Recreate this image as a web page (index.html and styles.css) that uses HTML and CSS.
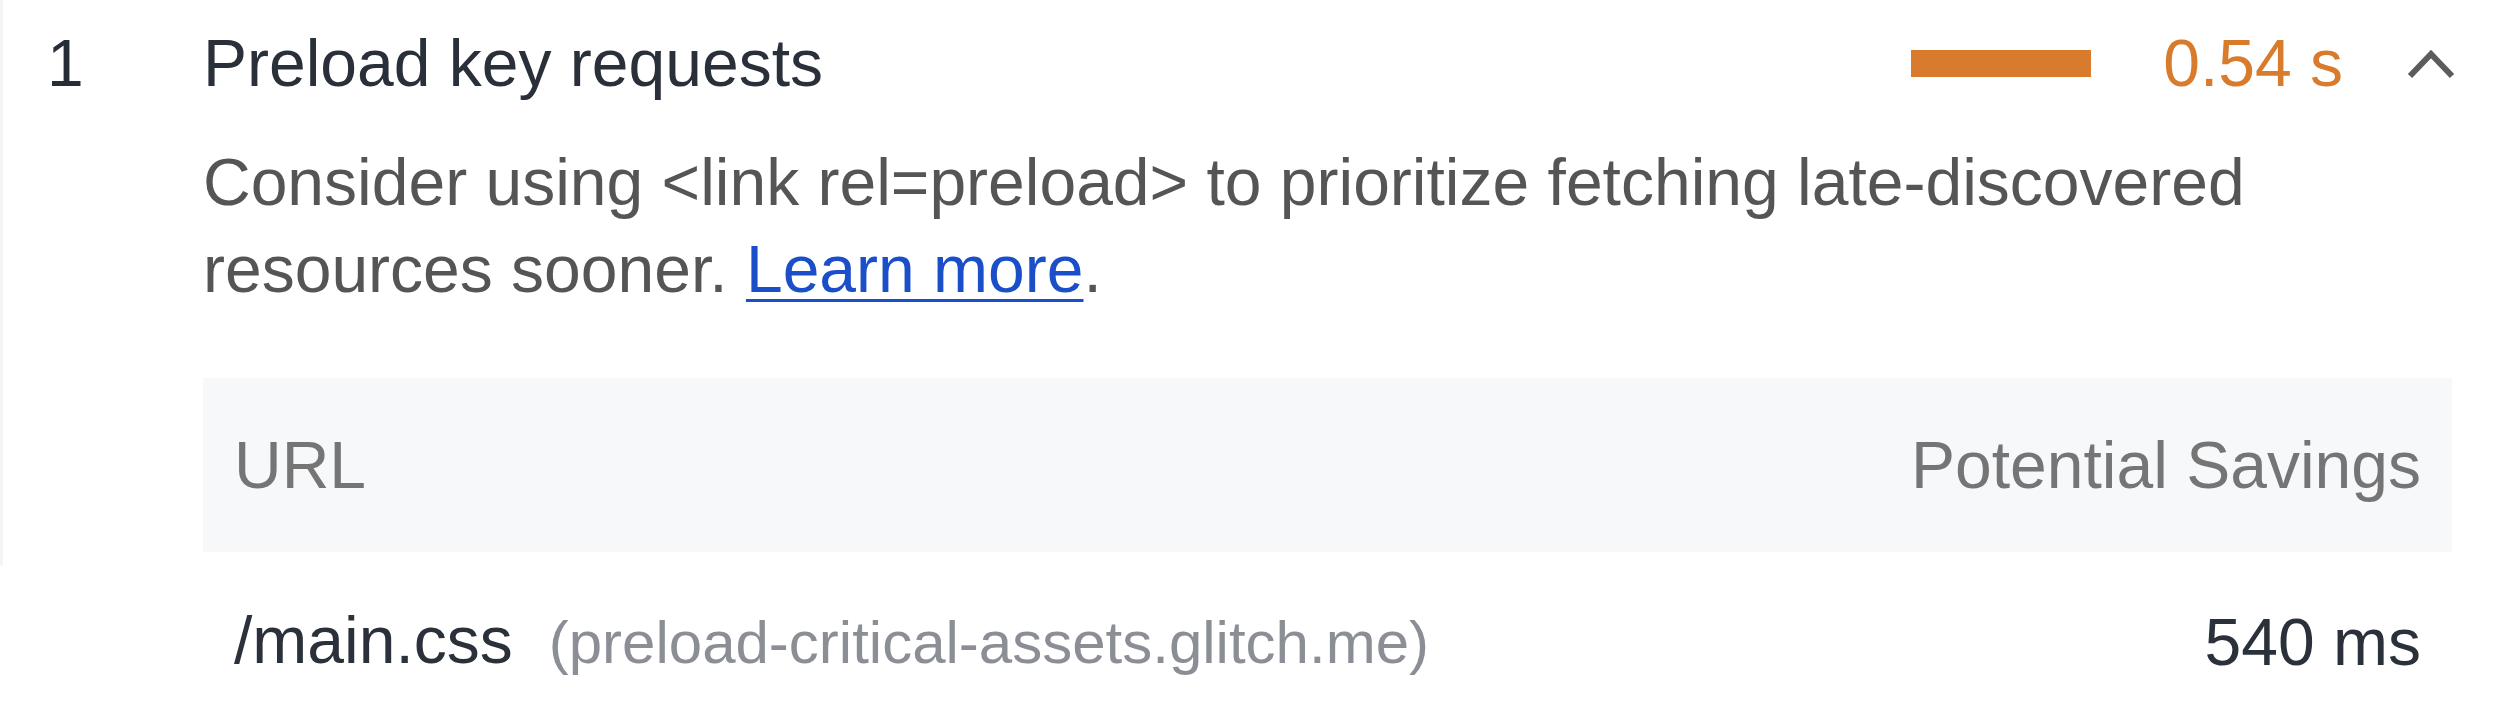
FILE: index.html
```html
<!DOCTYPE html>
<html lang="en">
<head>
<meta charset="utf-8">
<title>Preload key requests</title>
<link rel="stylesheet" href="styles.css">
</head>
<body>
<div class="page">
  <div class="edge"></div>
  <div class="audit">
    <div class="audit-header">
      <span class="audit-index">1</span>
      <span class="audit-title">Preload key requests</span>
      <span class="audit-bar"></span>
      <span class="audit-value">0.54 s</span>
      <svg class="chevron" width="48" height="30" viewBox="0 0 48 30" aria-hidden="true">
        <polyline points="3,27 24,5 45,27" fill="none" stroke="#5c5c5c" stroke-width="6"/>
      </svg>
    </div>
    <div class="audit-body">
      <p class="audit-desc">Consider using &lt;link rel=preload&gt; to prioritize fetching late-discovered resources sooner. <a class="link" href="#">Learn more</a>.</p>
      <table class="details">
        <thead>
          <tr><th class="col-url">URL</th><th class="col-num">Potential Savings</th></tr>
        </thead>
        <tbody>
          <tr>
            <td class="col-url"><span class="url-path">/main.css</span><span class="url-host">(preload-critical-assets.glitch.me)</span></td>
            <td class="col-num">540 ms</td>
          </tr>
        </tbody>
      </table>
    </div>
  </div>
</div>
</body>
</html>
```

FILE: styles.css
```css
html, body {
  margin: 0;
  padding: 0;
  background: #ffffff;
}

body {
  font-family: "Liberation Sans", Arial, Helvetica, sans-serif;
  font-size: 66px;
  color: #2a3039;
}

.page {
  display: flex;
  align-items: flex-start;
  width: 2500px;
  height: 721px;
  overflow: hidden;
}

.edge {
  flex: 0 0 3px;
  height: 566px;
  background: #f4f4f4;
  border-bottom-right-radius: 10px;
}

.audit {
  flex: 1;
  padding: 20px 45px 0 44px;
  min-width: 0;
}

.audit-header {
  display: flex;
  align-items: center;
  height: 87px;
  line-height: 87px;
}

.audit-index {
  flex: 0 0 156px;
  color: #262d36;
}

.audit-title {
  flex: 1;
  color: #2a3039;
}

.audit-bar {
  width: 180px;
  height: 27px;
  background: #d87b2c;
  margin-right: 72px;
}

.audit-value {
  color: #d87b2c;
  margin-right: 64px;
}

.chevron {
  display: block;
  flex: 0 0 48px;
}

.audit-body {
  padding-left: 156px;
}

.audit-desc {
  margin: 32px 0 0 0;
  max-width: 2200px;
  line-height: 87px;
  color: #555555;
}

.link {
  color: #1b4fc9;
  text-decoration: underline;
  text-decoration-thickness: 3px;
  text-underline-offset: 7px;
}

.details {
  margin-top: 65px;
  width: 2249px;
  border-collapse: collapse;
  font-size: 66px;
}

.details th {
  background: #f7f8fa;
  color: #757575;
  font-weight: normal;
  line-height: 76px;
  padding: 49px 31px;
}

.details td {
  line-height: 76px;
  padding: 50px 31px 0 31px;
  color: #2b313a;
}

.col-url {
  text-align: left;
}

.col-num {
  text-align: right;
}

.url-host {
  margin-left: 36px;
  font-size: 60px;
  color: #8b8f95;
}
```
